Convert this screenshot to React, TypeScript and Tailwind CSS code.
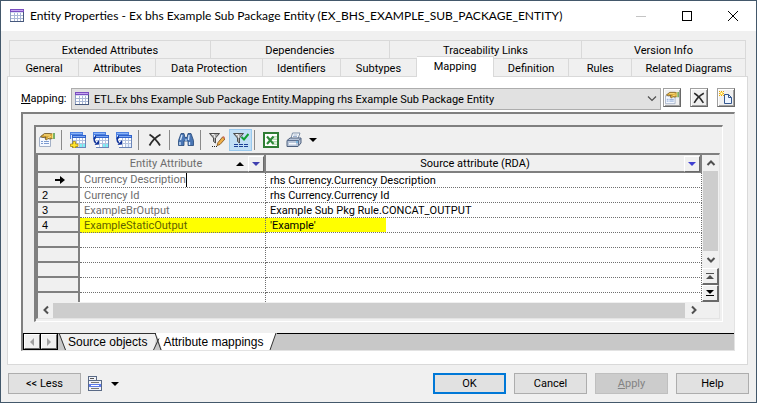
import React from "react";

type IconProps = { className?: string };

const GridIcon = ({ className = "size-4" }: IconProps) => (
  <svg viewBox="0 0 16 16" className={className} shapeRendering="crispEdges" aria-hidden="true">
    <rect x="1" y="1" width="14" height="13" fill="#fff" />
    <path d="M1 4h1v10H1z" fill="#8fa0c2" />
    <path d="M1 13h14v1H1zM14 4h1v10h-1z" fill="#46587c" />
    <path d="M2 7h12v1H2zM2 10h12v1H2zM5 5h1v8H5zM8 5h1v8H8zM11 5h1v8h-1z" fill="#a9b8d6" />
    <path d="M2 4h12v1H2z" fill="#d5dcf2" />
    <path d="M1 1h14v3H1z" fill="#7a4fc0" />
    <path d="M2 2h12v1H2z" fill="#c6a4f0" />
  </svg>
);

const PropertiesIcon = ({ className = "size-4" }: IconProps) => (
  <svg viewBox="0 0 16 16" className={className} aria-hidden="true">
    <path d="M.5 5.500h11v9H.5z" fill="#f4f8ff" stroke="#a3b0c6" />
    <path d="M2 9.500h2M5 9.500h5M2 11.500h2M5 11.500h5" stroke="#7c9bd0" />
    <path d="M1.500 4.500 5.500 1.500h6l2 .5v4.500l-3 .5-1.500-.5-1.500 1.500-1.500-1L7 5 4 5.500z" fill="#d9a93a" stroke="#5d4414" strokeWidth=".7" />
    <path d="M5 3h6M9 5.500l3-1" stroke="#ffe48a" />
    <path d="M14 1h2v6h-2z" fill="#7ab06a" />
    <path d="M13 1.500h1v5h-1z" fill="#f4e27a" />
  </svg>
);

const BlueGrid = ({ tinted = true }: { tinted?: boolean }) => (
  <g shapeRendering="crispEdges">
    <path d="M0 0h13v7H0z" fill="#4d80e0" />
    <path d="M1 1h11v1H1z" fill="#8ab4f8" />
    <path d="M1 3h2v4H1z" fill="#dce8fb" />
    <path d="M2 3h14v3H2z" fill="#2f62cc" />
    <path d="M3 4h12v1H3z" fill="#7fa9f2" />
    <path d="M2 6h14v10H2z" fill="#6c86b8" />
    <path d="M3 6h12v9H3z" fill="#fff" />
    <path d="M9 12h6v3H9z" fill={tinted ? "#7ff0f4" : "#e4efff"} />
    <path d="M3 8h12v1H3zM3 11h12v1H3zM6 6h1v9H6zM9 6h1v9H9zM12 6h1v9h-1z" fill="#b3c2de" />
  </g>
);

const AddGridIcon = () => (
  <svg viewBox="0 0 16 16" className="size-4" aria-hidden="true">
    <BlueGrid />
    <path d="M3 9.500h2.500V12H8v2.500H5.500V16H3v-1.500H.5V12H3z" fill="#ffe52e" stroke="#a98910" strokeWidth=".8" />
  </svg>
);

const ArrowGridIcon = ({ plain = false }: { plain?: boolean }) => (
  <svg viewBox="0 0 16 16" className="size-4" aria-hidden="true">
    <BlueGrid tinted={!plain} />
    <path d="M0 7h3v9H0z" fill="#f0f0f0" />
    <path d="M3 4.500C.5 5.500.5 9.500 3 11" fill="none" stroke="#12349b" strokeWidth="1.600" />
    <path d="M1.500 13 6 12.500V8z" fill="#12349b" />
  </svg>
);

const CrossIcon = ({ className = "size-4" }: IconProps) => (
  <svg viewBox="0 0 16 16" className={className} aria-hidden="true">
    <path d="M2.500 2.500c4 2.500 8 7 10.500 11M13.500 2.500C9 5 5 9 2.500 13.500" fill="none" stroke="#2b2b2b" strokeWidth="1.800" />
  </svg>
);

const BinocularsIcon = () => (
  <svg viewBox="0 0 16 16" className="size-4" aria-hidden="true">
    <path d="M3 1.500h3l1 4h2l1-4h3l2.500 7v5h-5.500V9H6v4.500H.5v-5z" fill="#4a76b4" stroke="#234679" strokeWidth=".8" />
    <path d="M4 3 2.500 8M11 3l-.5 5M2 10v3M11.500 10v3" stroke="#d3e5fa" strokeWidth="1.300" />
    <path d="M7 7h2v2H7z" fill="#8fb1dc" />
  </svg>
);

const Funnel = () => (
  <>
    <path d="M.5 1.500h10l-4 4.500v5l-2-1.500V6z" fill="#a9a9a9" stroke="#4c4c4c" />
    <path d="M3 2.500h2L6 6" stroke="#f2f2f2" fill="none" />
  </>
);

const FilterEditIcon = () => (
  <svg viewBox="0 0 16 16" className="size-4" aria-hidden="true">
    <Funnel />
    <path d="M3 14h1v1H3zM5 14h1v1H5zM7 14h1v1H7z" fill="#222" />
    <path d="m8 13.500 1-3L13.500 5 16 7l-5 5.500z" fill="#f0b04a" stroke="#7a4b17" strokeWidth=".8" />
    <path d="m13.500 5 1-1L16 5.500V7z" fill="#d46a5c" />
  </svg>
);

const FilterCheckIcon = () => (
  <svg viewBox="0 0 16 16" className="size-4" aria-hidden="true">
    <Funnel />
    <path d="m8.500 5 2.500 2.500L15.500 2" fill="none" stroke="#12a032" strokeWidth="2" />
    <path d="M1 12h4v1H1zM6 12h4v1H6zM11 12h4v1h-4zM1 14h4v1H1zM6 14h4v1H6zM11 14h4v1h-4z" fill="#1c3f96" />
  </svg>
);

const SpreadsheetIcon = () => (
  <svg viewBox="0 0 16 16" className="size-4" aria-hidden="true">
    <path d="M1 1h14v14H1z" fill="#fff" stroke="#2f7d34" strokeWidth="2" />
    <path d="M10 4h4v9h-4z" fill="#b7dcb4" />
    <path d="M10 6h4M10 8.500h4M10 11h4" stroke="#fff" />
    <path d="m4 4.500 6.500 7.500M10.500 4.500 4 12" stroke="#2e8b38" strokeWidth="2.200" />
  </svg>
);

const PrinterIcon = () => (
  <svg viewBox="0 0 16 16" className="size-4" aria-hidden="true">
    <path d="m5 6.500 1.500-5.500H14l-2 5.500z" fill="#fff" stroke="#7c8fa8" />
    <path d="M7.500 3h4M7 4.500h4" stroke="#9db2d0" />
    <path d="M1 8.500 4 6h11v5l-3 3.500H1z" fill="#b9c6da" stroke="#4e607d" />
    <path d="M1 8.500h11.500L15 6.500M12.500 8.500v5" fill="none" stroke="#5d7090" />
    <path d="M3 11h7v1.500H3z" fill="#f8fbff" />
    <path d="M10 9.500h2v1h-2z" fill="#41a7e0" />
  </svg>
);

const NewPageIcon = ({ className = "size-4" }: IconProps) => (
  <svg viewBox="0 0 14 14" className={className} aria-hidden="true">
    <path d="M5.500 3.500h4l3 3v6h-7z" fill="#eef5ff" stroke="#33578f" />
    <path d="M9.500 3.500v3h3" fill="none" stroke="#33578f" />
    <path d="M0 0h1v1H0zM2 0h1v1H2zM4 0h1v1H4zM0 2h1v1H0zM4 2h1v1H4zM0 4h1v1H0zM2 4h1v1H2zM4 4h1v1H4z" fill="#eca900" />
    <path d="M1 1h3v3H1z" fill="#ffd94f" />
    <path d="M2 2h1v1H2z" fill="#fff" />
  </svg>
);

const MenuListIcon = () => (
  <svg viewBox="0 0 16 16" className="size-4" shapeRendering="crispEdges" aria-hidden="true">
    <path d="M1 0h9v4h5v11H1z" fill="#5a6a86" />
    <path d="M2 1h7v3H2zM2 5h12v9H2z" fill="#f1f3f8" />
    <path d="M3 2h4v1H3z" fill="#555" />
    <path d="M2 8h12v3H2z" fill="#5f7bea" />
    <path d="M4 6h8v1H4zM4 12h8v1H4z" fill="#777" />
    <path d="M4 9h8v1H4z" fill="#fff" />
  </svg>
);

const Caret = ({ className = "" }: IconProps) => (
  <svg viewBox="0 0 8 4" className={`h-1 w-2 ${className}`} aria-hidden="true">
    <path d="M0 0h8L4 4z" fill="currentColor" />
  </svg>
);

const Chevron = ({ className = "" }: IconProps) => (
  <svg viewBox="0 0 10 10" className={`size-2.5 ${className}`} aria-hidden="true">
    <path d="m1.500 3 3.500 3.500L8.500 3" fill="none" stroke="currentColor" strokeWidth="2" />
  </svg>
);

const Separator = () => <span className="h-5 w-px shrink-0 bg-[#8a8a8a]" />;

const raised = "border border-t-white border-l-white border-r-[#696969] border-b-[#696969] bg-[#f0f0f0]";

const ToolButton = ({ label, children }: { label: string; children: React.ReactNode }) => (
  <button type="button" aria-label={label} className="flex size-4 shrink-0 items-center justify-center">
    {children}
  </button>
);

const SideButton = ({ label, children }: { label: string; children: React.ReactNode }) => (
  <button
    type="button"
    aria-label={label}
    className="flex h-[19px] w-[18px] shrink-0 items-center justify-center border border-t-[#a0a0a0] border-r-[#696969] border-b-[#696969] border-l-[#a0a0a0] bg-[#f0f0f0] shadow-[inset_1px_1px_0_#fff,inset_-1px_-1px_0_#a0a0a0]"
  >
    {children}
  </button>
);

const backTabs = [
  { name: "Extended Attributes", grow: "grow-[201]" },
  { name: "Dependencies", grow: "grow-[179]" },
  { name: "Traceability Links", grow: "grow-[192]" },
  { name: "Version Info", grow: "grow-[164]" },
];

const frontTabs = [
  { name: "General", grow: "grow-[69]" },
  { name: "Attributes", grow: "grow-[77]" },
  { name: "Data Protection", grow: "grow-[107]" },
  { name: "Identifiers", grow: "grow-[78]" },
  { name: "Subtypes", grow: "grow-[76]" },
  { name: "Mapping", grow: "grow-[77]" },
  { name: "Definition", grow: "grow-[75]" },
  { name: "Rules", grow: "grow-[63]" },
  { name: "Related Diagrams", grow: "grow-[114]" },
];

const rows = [
  { attribute: "Currency Description", source: "rhs Currency.Currency Description" },
  { attribute: "Currency Id", source: "rhs Currency.Currency Id" },
  { attribute: "ExampleBrOutput", source: "Example Sub Pkg Rule.CONCAT_OUTPUT" },
  { attribute: "ExampleStaticOutput", source: "'Example'" },
  { attribute: "", source: "" },
  { attribute: "", source: "" },
  { attribute: "", source: "" },
  { attribute: "", source: "" },
  { attribute: "", source: "" },
];

const TitleBar = () => (
  <header className="flex h-[30px] shrink-0 items-center bg-white pl-2">
    <GridIcon />
    <h1 className="ml-[5px] flex-1 whitespace-nowrap font-[Lato,'Open_Sans',sans-serif] text-[12px] leading-4">
      Entity Properties - Ex bhs Example Sub Package Entity (EX_BHS_EXAMPLE_SUB_PACKAGE_ENTITY)
    </h1>
    <div className="flex items-center gap-9 pr-[18px]">
      <button type="button" aria-label="Minimize" disabled className="flex size-2.5 items-center">
        <span className="h-px w-full bg-[#c4c4c4]" />
      </button>
      <button type="button" aria-label="Maximize" className="size-2.5 border border-black" />
      <button type="button" aria-label="Close" className="size-2.5">
        <svg viewBox="0 0 10 10" className="size-2.5" aria-hidden="true">
          <path d="m0 0 10 10M10 0 0 10" stroke="#000" />
        </svg>
      </button>
    </div>
  </header>
);

const MappingGrid = () => (
  <table className="w-full table-fixed border-separate border-spacing-0 bg-white text-left">
    <colgroup>
      <col className="w-[42px]" />
      <col className="w-[186px]" />
      <col />
    </colgroup>
    <thead>
      <tr className="h-[18px] bg-[#f0f0f0] text-center">
        <th className="border-r-2 border-b-2 border-[#808080] p-0" aria-label="Row" />
        <th className="border-r-2 border-b-2 border-[#808080] p-0 font-normal text-[#6d6d6d]">
          <div className="flex h-4 items-center pt-px">
            <span className="flex-1 pl-4">Entity Attribute</span>
            <Caret className="mr-1 rotate-180 text-black" />
            <button type="button" aria-label="Filter Entity Attribute" className={`flex h-4 w-4 items-center justify-center text-[#3f3fb0] ${raised}`}>
              <Caret />
            </button>
          </div>
        </th>
        <th className="border-r-2 border-b-2 border-[#808080] p-0 font-normal">
          <div className="flex h-4 items-center pt-px">
            <span className="flex-1">Source attribute (RDA)</span>
            <button type="button" aria-label="Filter Source attribute" className={`flex h-4 w-4 items-center justify-center text-[#3f3fd0] ${raised}`}>
              <Caret />
            </button>
          </div>
        </th>
      </tr>
    </thead>
    <tbody>
      {rows.map((row, i) => {
        const marked = i === 3;
        return (
          <tr key={i} className="h-[15px]">
            <th scope="row" className="border-r-2 border-b-2 border-[#808080] bg-[#f0f0f0] py-0 pl-1 font-['Liberation_Sans',Arial,sans-serif] font-normal">
              {i === 0 ? (
                <svg viewBox="0 0 10 8" className="mx-auto h-2 w-2.5" aria-label="Current row">
                  <path d="M0 3h5V0l5 4-5 4V5H0z" fill="#000" />
                </svg>
              ) : (
                <span className="block h-[13px] leading-[14px]">{row.attribute && i + 1}</span>
              )}
            </th>
            <td className={`border-r border-b border-dotted border-[#707070] py-0 pl-1 ${marked ? "bg-[#ffff00] text-[#5f5f00]" : "text-[#6d6d6d]"}`}>
              {i === 0 ? (
                <input
                  aria-label="Entity Attribute"
                  defaultValue={row.attribute}
                  className="block h-[14px] field-sizing-content border-r border-black leading-[14px] outline-none"
                />
              ) : (
                <span className="block h-[14px] pt-0.5 leading-[12px]">{row.attribute}</span>
              )}
            </td>
            <td className="border-r border-b border-dotted border-[#707070] p-0">
              <span className={`block h-[14px] pt-0.5 pl-1 leading-[12px] whitespace-nowrap ${marked ? "w-[120px] bg-[#ffff00]" : ""}`}>{row.source}</span>
            </td>
          </tr>
        );
      })}
    </tbody>
  </table>
);

const VerticalScroll = () => (
  <div className="flex w-[17px] shrink-0 flex-col items-center bg-[#f0f0f0] text-[#505050]">
    <button type="button" aria-label="Scroll up" className="flex h-4 w-full items-center justify-center">
      <Chevron className="rotate-180" />
    </button>
    <div className="min-h-0 w-[15px] flex-1 bg-[#cdcdcd]" />
    <button type="button" aria-label="Scroll down" className="flex h-[17px] w-full items-center justify-center">
      <Chevron />
    </button>
    <button type="button" aria-label="Previous record" className={`flex h-[17px] w-full items-center justify-center ${raised} border-r-2 border-b-2`}>
      <svg viewBox="0 0 8 6" className="h-1.5 w-2" aria-hidden="true"><path d="M0 0h8v1H0zM4 2l4 4H0z" fill="#505050" /></svg>
    </button>
    <button type="button" aria-label="Next record" className={`flex h-[17px] w-full items-center justify-center ${raised} border-r-2 border-b-2`}>
      <svg viewBox="0 0 8 6" className="h-1.5 w-2" aria-hidden="true"><path d="M0 5h8v1H0zM0 0h8L4 4z" fill="#000" /></svg>
    </button>
  </div>
);

const HorizontalScroll = () => (
  <div className="flex h-4 shrink-0 items-center bg-[#f0f0f0] pr-4 text-[#505050]">
    <button type="button" aria-label="Scroll left" className="flex w-[15px] items-center justify-center">
      <Chevron className="rotate-90" />
    </button>
    <div className="h-[15px] flex-1 bg-[#cdcdcd]" />
    <button type="button" aria-label="Scroll right" className="flex w-[18px] items-center justify-center">
      <Chevron className="-rotate-90" />
    </button>
  </div>
);

const SheetTabs = () => (
  <div className="flex h-[17px] shrink-0 bg-[#c8c8c8] font-['Liberation_Sans',Arial,sans-serif] text-[12px] leading-4">
    <div className="flex gap-px border border-black bg-black">
      <button type="button" aria-label="Previous sheet" className={`flex w-4 items-center justify-center text-[#a0a0a0] ${raised}`}>
        <Caret className="rotate-90" />
      </button>
      <button type="button" aria-label="Next sheet" className={`flex w-4 items-center justify-center text-[#a0a0a0] ${raised}`}>
        <Caret className="-rotate-90" />
      </button>
    </div>
    <svg viewBox="0 0 8 17" className="h-[17px] w-2" aria-hidden="true">
      <path d="M1 0h7v17z" fill="#f0f0f0" /><path d="M0 .5h8M1 0l6.500 17" stroke="#333" />
    </svg>
    <button type="button" className="border-t border-[#333] bg-[#f0f0f0] px-0.5 whitespace-nowrap">Source objects</button>
    <svg viewBox="0 0 14 17" className="h-[17px] w-3.5" aria-hidden="true">
      <path d="M0 0h8L5 17H0z" fill="#f0f0f0" /><path d="M7 0h7v17h-1z" fill="#fff" />
      <path d="M0 .5h7M10 5.500 4.500 17M6 0l6 17" stroke="#333" fill="none" />
    </svg>
    <button type="button" className="bg-white pr-0.5 whitespace-nowrap">Attribute mappings</button>
    <svg viewBox="0 0 12 17" className="h-[17px] w-3" aria-hidden="true">
      <path d="M0 0h11L5 17H0z" fill="#fff" /><path d="m11 0-6 17" stroke="#333" />
    </svg>
    <span className="flex-1 border-t border-black" />
  </div>
);

const dialogButton = "h-[21px] w-[73px] border border-[#adadad] bg-[#e1e1e1]";

export default function App() {
  return (
    <main className="flex h-screen min-h-[360px] flex-col overflow-hidden border border-[#43586b] bg-[#f0f0f0] font-[Roboto,'Liberation_Sans',sans-serif] text-[11px] leading-[14px] text-black">
      <TitleBar />

      <div className="flex min-h-0 flex-1 flex-col px-1.5 pt-[9px] pr-2">
        <nav className="mx-0.5 shrink-0 border-l border-[#d9d9d9]">
          <div className="flex h-[18px]">
            {backTabs.map((tab) => (
              <button key={tab.name} type="button" className={`basis-0 border-t border-r border-[#d9d9d9] pt-0.5 whitespace-nowrap ${tab.grow}`}>
                {tab.name}
              </button>
            ))}
          </div>
          <div className="flex h-[18px]">
            {frontTabs.map((tab) => (
              <button
                key={tab.name}
                type="button"
                className={`basis-0 border-t border-r border-[#d9d9d9] whitespace-nowrap ${tab.grow} ${
                  tab.name === "Mapping" ? "z-10 -mt-0.5 -mb-px bg-white" : "pt-0.5"
                }`}
              >
                {tab.name}
              </button>
            ))}
          </div>
        </nav>

        <section className="flex min-h-0 flex-1 flex-col border border-[#d9d9d9] bg-white px-[13px] pt-[11px] pr-3 pb-[13px]">
          <div className="flex shrink-0 items-start">
            <label htmlFor="mapping" className="w-[50px] shrink-0 self-center">
              <u>M</u>apping:
            </label>
            <div className="relative min-w-0 flex-1">
              <select id="mapping" className="block h-[22px] w-full appearance-none border border-[#adadad] bg-[#e1e1e1] pt-0.5 pr-5 pl-[22px]">
                <option>ETL.Ex bhs Example Sub Package Entity.Mapping rhs Example Sub Package Entity</option>
              </select>
              <GridIcon className="pointer-events-none absolute top-[3px] left-[3px] size-4" />
              <svg viewBox="0 0 10 6" className="pointer-events-none absolute top-2 right-1 h-1.5 w-2.5" aria-hidden="true">
                <path d="m1 .5 4 4 4-4" fill="none" stroke="#505050" strokeWidth="1.200" />
              </svg>
            </div>
            <div className="ml-0.5 flex gap-[9px]">
              <SideButton label="Properties"><PropertiesIcon className="size-3.5" /></SideButton>
              <SideButton label="Delete"><CrossIcon className="size-3.5" /></SideButton>
              <SideButton label="Create"><NewPageIcon className="size-3.5" /></SideButton>
            </div>
          </div>

          <div className="mt-0.5 flex min-h-0 flex-1 flex-col border-t-2 border-r border-b border-l-2 border-t-[#808080] border-r-[#e3e3e3] border-b-[#e3e3e3] border-l-[#808080] bg-[#f0f0f0]">
            <div className="mx-[11px] mt-[11px] mb-[11px] flex min-h-0 flex-1 flex-col border-t-2 border-r border-b border-l-2 border-t-[#808080] border-r-white border-b-white border-l-[#808080]">
              <div className="flex h-[26px] shrink-0 items-center pl-[3px]">
                <ToolButton label="Properties"><PropertiesIcon /></ToolButton>
                <span className="w-1.5" /><Separator /><span className="w-2" />
                <div className="flex gap-[7px]">
                  <ToolButton label="Add mappings"><AddGridIcon /></ToolButton>
                  <ToolButton label="Add sources"><ArrowGridIcon /></ToolButton>
                  <ToolButton label="Create from sources"><ArrowGridIcon plain /></ToolButton>
                </div>
                <span className="w-1.5" /><Separator /><span className="w-2" />
                <ToolButton label="Delete"><CrossIcon /></ToolButton>
                <span className="w-1.5" /><Separator /><span className="w-2" />
                <ToolButton label="Find"><BinocularsIcon /></ToolButton>
                <span className="w-1.5" /><Separator /><span className="w-2" />
                <ToolButton label="Customize filter"><FilterEditIcon /></ToolButton>
                <button type="button" aria-label="Enable filter" className="ml-1 flex h-[22px] w-[23px] items-center justify-center border border-[#99c9ee] bg-[#c2dff5]">
                  <FilterCheckIcon />
                </button>
                <span className="w-0.5" /><Separator /><span className="w-2" />
                <ToolButton label="Export to spreadsheet"><SpreadsheetIcon /></ToolButton>
                <span className="w-[7px]" />
                <ToolButton label="Print"><PrinterIcon /></ToolButton>
                <button type="button" aria-label="Print options" className="ml-[7px]"><Caret /></button>
              </div>
              <div className="mr-0.5 mb-0.5 flex min-h-0 flex-1 flex-col border-t-2 border-r border-b border-l-2 border-t-[#808080] border-r-[#e3e3e3] border-b-[#e3e3e3] border-l-[#808080]">
                <div className="flex min-h-0 flex-1">
                  <div className="min-w-0 flex-1 overflow-hidden bg-white"><MappingGrid /></div>
                  <VerticalScroll />
                </div>
                <HorizontalScroll />
              </div>
            </div>
            <SheetTabs />
          </div>
        </section>
      </div>

      <footer className="flex h-[37px] shrink-0 items-center pr-[7px] pl-[7px]">
        <button type="button" className={dialogButton}>&lt;&lt; Less</button>
        <button type="button" aria-label="Options menu" className="ml-1.5 flex items-center gap-2">
          <MenuListIcon />
          <Caret />
        </button>
        <div className="ml-auto flex gap-2">
          <button type="button" className="h-[21px] w-[73px] border-2 border-[#0078d7] bg-[#e1e1e1]">OK</button>
          <button type="button" className={dialogButton}>Cancel</button>
          <button type="button" disabled className="h-[21px] w-[73px] border border-[#bfbfbf] bg-[#cccccc] text-[#838383]">
            <u>A</u>pply
          </button>
          <button type="button" className={dialogButton}>Help</button>
        </div>
      </footer>
    </main>
  );
}
